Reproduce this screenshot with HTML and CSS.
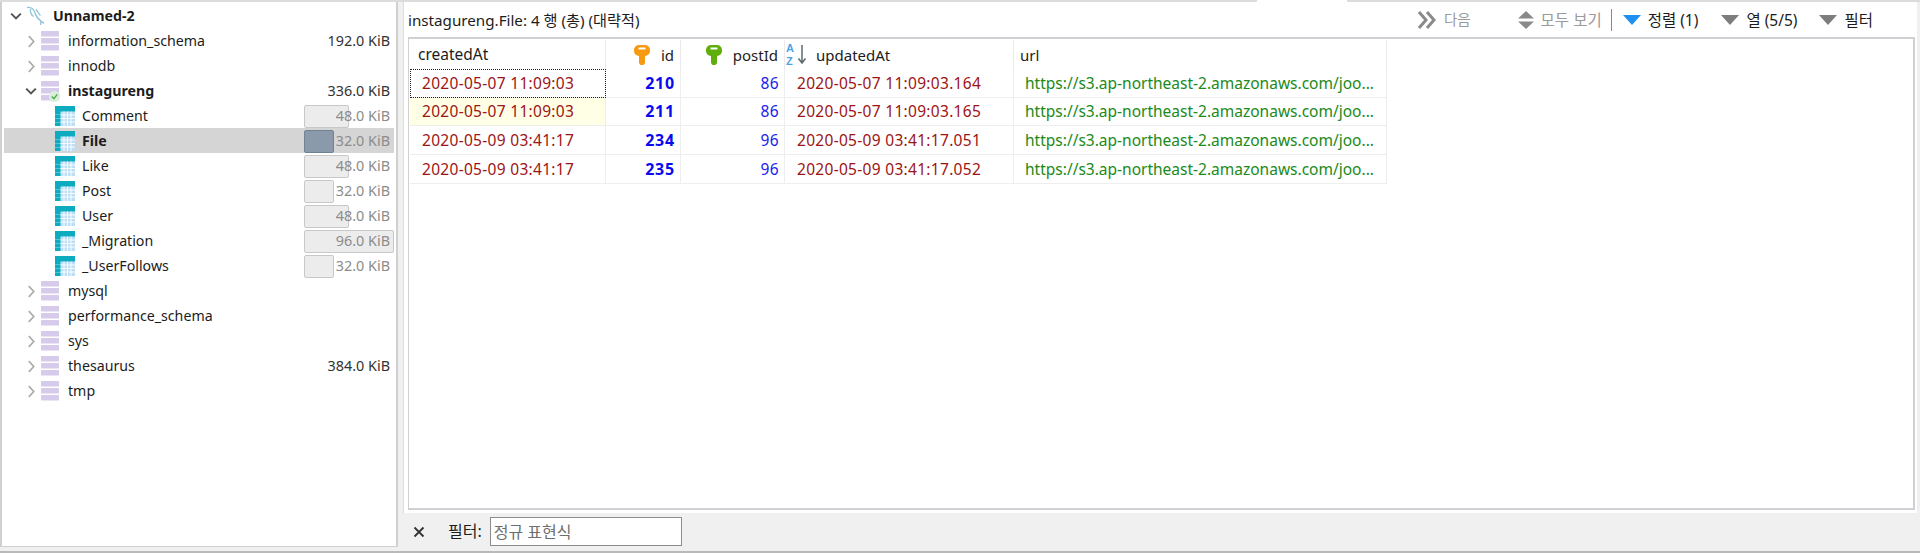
FILE: index.html
```html
<!DOCTYPE html>
<html lang="ko">
<head>
<meta charset="utf-8">
<title>instagureng.File</title>
<link rel="stylesheet" href="styles.css">
</head>
<body>
<svg class="defs" width="0" height="0">
  <defs>
    <symbol id="db" viewBox="0 0 18 20"><rect x="0" y="0" width="18" height="5.4" rx=".6" fill="#d6cbea"/><rect x="0" y="7" width="18" height="5.4" rx=".6" fill="#d6cbea"/><rect x="0" y="14" width="18" height="5.4" rx=".6" fill="#d6cbea"/></symbol>
    <symbol id="tbl" viewBox="0 0 20 20"><rect width="20" height="20" fill="#bcdff7"/><path d="M0 0H20V5.500H5.500V20H0Z" fill="#0cabc0"/><path d="M0 8.500H5.500M0 12.500H5.500M0 16.500H5.500" stroke="#fff" stroke-width=".6" opacity=".5"/><path d="M9 5.500V20M12.500 5.500V20M16 5.500V20M5.500 9H20M5.500 12.500H20M5.500 16H20" stroke="#fff" stroke-width=".9"/></symbol>
    <symbol id="ck" viewBox="0 0 10 10"><path d="M1 3l4 4 4-4" fill="none" stroke="#555" stroke-width="1.7"/></symbol>
    <symbol id="cr" viewBox="0 0 10 14"><path d="M2 1l5.500 6L2 13" fill="none" stroke="#aaa" stroke-width="1.8"/></symbol>
    <symbol id="key" viewBox="0 0 16 20"><path fill-rule="evenodd" d="M5 0H11A5 5 0 0 1 16 5V6A5 5 0 0 1 11 11V18L9.500 20H6.500L5 18V11A5 5 0 0 1 0 6V5A5 5 0 0 1 5 0ZM4.500 2.500V4.500H11.500V2.500Z"/></symbol>
    <symbol id="tri" viewBox="0 0 18 10"><path d="M0 0H18L9 10Z"/></symbol>
  </defs>
</svg>
<div class="topstrip"><span class="tab"></span></div>
<div class="main">
  <aside class="tree">
    <div class="row root"><svg class="chev-d"><use href="#ck"/></svg>
      <svg class="dolphin" viewBox="0 0 20 20"><path d="M1 1.500C6 1 8 3.500 9 7 10 10 12 13 15 15L18 17.500M15 15l-.5 4M4.500 3C4 6 5 8.500 7.500 10.500M10 3.500C12 6 13 8 14.500 9.500" fill="none" stroke="#8fc3d6" stroke-width="1.300"/></svg>
      <b class="name">Unnamed-2</b></div>
    <div class="row db"><svg class="chev-r"><use href="#cr"/></svg><svg class="dbi"><use href="#db"/></svg><span class="name">information_schema</span><span class="size">192.0 KiB</span></div>
    <div class="row db"><svg class="chev-r"><use href="#cr"/></svg><svg class="dbi"><use href="#db"/></svg><span class="name">innodb</span></div>
    <div class="row db"><svg class="chev-d wide"><use href="#ck"/></svg><span class="dbwrap"><svg class="dbi"><use href="#db"/></svg><svg class="okmark" viewBox="0 0 10 10"><circle cx="5" cy="5" r="5" fill="#d9efd9"/><path d="M2.500 5l2 2 3-4" fill="none" stroke="#4aa84a" stroke-width="1.200"/></svg></span><b class="name">instagureng</b><span class="size">336.0 KiB</span></div>
    <div class="row tb"><svg class="tbi"><use href="#tbl"/></svg><span class="name">Comment</span><span class="size faded"><i class="bar" style="width:45px"></i><em>48.0 KiB</em></span></div>
    <div class="row tb sel"><svg class="tbi"><use href="#tbl"/></svg><b class="name">File</b><span class="size faded"><i class="bar" style="width:30px"></i><em>32.0 KiB</em></span></div>
    <div class="row tb"><svg class="tbi"><use href="#tbl"/></svg><span class="name">Like</span><span class="size faded"><i class="bar" style="width:45px"></i><em>48.0 KiB</em></span></div>
    <div class="row tb"><svg class="tbi"><use href="#tbl"/></svg><span class="name">Post</span><span class="size faded"><i class="bar" style="width:30px"></i><em>32.0 KiB</em></span></div>
    <div class="row tb"><svg class="tbi"><use href="#tbl"/></svg><span class="name">User</span><span class="size faded"><i class="bar" style="width:45px"></i><em>48.0 KiB</em></span></div>
    <div class="row tb"><svg class="tbi"><use href="#tbl"/></svg><span class="name">_Migration</span><span class="size faded"><i class="bar" style="width:90px"></i><em>96.0 KiB</em></span></div>
    <div class="row tb"><svg class="tbi"><use href="#tbl"/></svg><span class="name">_UserFollows</span><span class="size faded"><i class="bar" style="width:30px"></i><em>32.0 KiB</em></span></div>
    <div class="row db"><svg class="chev-r"><use href="#cr"/></svg><svg class="dbi"><use href="#db"/></svg><span class="name">mysql</span></div>
    <div class="row db"><svg class="chev-r"><use href="#cr"/></svg><svg class="dbi"><use href="#db"/></svg><span class="name">performance_schema</span></div>
    <div class="row db"><svg class="chev-r"><use href="#cr"/></svg><svg class="dbi"><use href="#db"/></svg><span class="name">sys</span></div>
    <div class="row db"><svg class="chev-r"><use href="#cr"/></svg><svg class="dbi"><use href="#db"/></svg><span class="name">thesaurus</span><span class="size">384.0 KiB</span></div>
    <div class="row db"><svg class="chev-r"><use href="#cr"/></svg><svg class="dbi"><use href="#db"/></svg><span class="name">tmp</span></div>
  </aside>
  <section class="content">
    <div class="panel">
      <div class="toolbar">
        <span class="title">instagureng.File: 4 행 (총) (대략적)</span>
        <div class="actions">
          <span class="act dim w-next"><svg class="dbl" viewBox="0 0 20 20"><path d="M2 2l7 8-7 8M10 2l7 8-7 8" fill="none" stroke="#8a8a8a" stroke-width="3"/></svg>다음</span>
          <span class="act dim w-all"><svg class="updown" viewBox="0 0 16 20"><path d="M8 1l8 7.500H0Z" fill="#8a8a8a"/><path d="M0 11.500H16L8 19Z" fill="#8a8a8a"/></svg>모두 보기</span>
          <span class="sep"></span>
          <span class="act w-sort"><svg class="tri blue"><use href="#tri"/></svg>정렬 (1)</span>
          <span class="act w-col"><svg class="tri"><use href="#tri"/></svg>열 (5/5)</span>
          <span class="act w-flt"><svg class="tri"><use href="#tri"/></svg>필터</span>
        </div>
      </div>
      <div class="gridbox">
        <div class="grid">
          <div class="th c1"><span class="label">createdAt</span></div>
          <div class="th c2 end"><svg class="keyi orange"><use href="#key"/></svg><span class="label">id</span></div>
          <div class="th c3 end"><svg class="keyi green"><use href="#key"/></svg><span class="label">postId</span></div>
          <div class="th c4"><svg class="az" viewBox="0 -3 24 28"><text x="0" y="8" class="azt">A</text><text x="0" y="20.500" class="azt">Z</text><path d="M16 1V18M12.500 14.500L16 19l3.500-4.500" fill="none" stroke="#5c6b74" stroke-width="1.500"/></svg><span class="label">updatedAt</span></div>
          <div class="th c5"><span class="label">url</span></div>

          <div class="td date focus">2020-05-07 11:09:03</div><div class="td pk">210</div><div class="td num">86</div><div class="td date">2020-05-07 11:09:03.164</div><div class="td url">https://s3.ap-northeast-2.amazonaws.com/joo...</div>

          <div class="td date odd">2020-05-07 11:09:03</div><div class="td pk">211</div><div class="td num">86</div><div class="td date">2020-05-07 11:09:03.165</div><div class="td url">https://s3.ap-northeast-2.amazonaws.com/joo...</div>

          <div class="td date">2020-05-09 03:41:17</div><div class="td pk">234</div><div class="td num">96</div><div class="td date">2020-05-09 03:41:17.051</div><div class="td url">https://s3.ap-northeast-2.amazonaws.com/joo...</div>

          <div class="td date">2020-05-09 03:41:17</div><div class="td pk">235</div><div class="td num">96</div><div class="td date">2020-05-09 03:41:17.052</div><div class="td url">https://s3.ap-northeast-2.amazonaws.com/joo...</div>
        </div>
      </div>
    </div>
    <div class="filterbar">
      <svg class="close" viewBox="0 0 12 12"><path d="M1.500 1.500l9 9M10.500 1.500l-9 9" stroke="#333" stroke-width="1.800"/></svg>
      <span class="flabel">필터:</span>
      <input class="finput" type="text" placeholder="정규 표현식">
    </div>
  </section>
</div>
<div class="bottomstrip"></div>
</body>
</html>
```
FILE: styles.css
```css
* { box-sizing: border-box; }
html, body { margin: 0; padding: 0; }
body {
  width: 1920px;
  height: 553px;
  overflow: hidden;
  background: #f0f0f0;
  color: #1c1c1c;
  font: 14px/1.2 "Noto Sans", "Noto Sans CJK KR", sans-serif;
  display: flex;
  flex-direction: column;
}
.defs { position: absolute; }
.topstrip { height: 2px; background: #dcdcdc; padding-left: 1257px; flex: none; }
.tab { display: block; width: 90px; height: 2px; background: #fff; }
.main { flex: 1; display: flex; min-height: 0; }
.bottomstrip { height: 2px; flex: none; background: #b9b9b9; }

.tree {
  width: 398px;
  margin-bottom: 4px;
  padding: 1px 2px 0 2px;
  background: #fff;
  border: 2px solid #d0d0d0;
  border-width: 0 2px 1px 2px;
  flex: none;
  font-size: 14.2px;
}
.row { height: 25px; display: flex; align-items: center; white-space: nowrap; padding-top: 1px; }
.row.root { padding-left: 6px; padding-top: 0; }
.row.db { padding-left: 21px; }
.row.tb { padding-left: 51px; }
.row.sel { background: #d5d5d5; }
.chev-d { width: 12px; height: 12px; margin-right: 4px; flex: none; }
.chev-r { width: 9px; height: 13px; margin-left: 2px; margin-right: 5px; flex: none; }
.dolphin { width: 20px; height: 20px; margin-right: 7px; flex: none; }
.dbi { width: 18px; height: 20px; display: block; flex: none; }
.row.db .name { margin-left: 9px; }
.dbwrap { position: relative; display: block; width: 18px; height: 20px; flex: none; }
.okmark { position: absolute; right: -1px; bottom: -1px; width: 11px; height: 11px; }
.tbi { width: 20px; height: 20px; flex: none; margin-right: 7px; }
b.name { font-weight: 700; }
.size { margin-left: auto; width: 90px; padding-right: 4px; text-align: right; position: relative; color: #333; font-size: 14.4px; }
.size.faded { color: #8c8c8c; }
.size em { font-style: normal; position: relative; }
.bar {
  position: absolute;
  left: 0;
  top: -2px;
  height: 23px;
  background: #ececec;
  border: 1px solid #c8c8c8;
  border-radius: 2px;
}
.sel .bar { background: #8b9aaa; border-color: #6f8296; }

.content { flex: 1; display: flex; flex-direction: column; padding: 0 3px 0 5px; min-width: 0; }
.panel {
  height: 511px;
  flex: none;
  background: #fff;
  border-left: 1px solid #dcdcdc;
  padding: 0 0 3px 4px;
  display: flex;
  flex-direction: column;
}
.toolbar { height: 35px; display: flex; align-items: center; flex: none; padding-top: 1px; }
.title { font-size: 15.2px; }
.actions { margin-left: auto; display: flex; align-items: center; }
.act { display: flex; align-items: center; font-size: 15.5px; }
.act.dim { color: #9a9a9a; }
.act.w-next { font-size: 14.5px; }
.dbl { width: 20px; height: 20px; margin-right: 7px; }
.updown { width: 16px; height: 20px; margin-right: 7px; }
.tri { width: 18px; height: 10px; margin-right: 7px; fill: #7d7d7d; }
.tri.blue { fill: #1e90f0; }
.sep { width: 1px; height: 22px; background: #8a8a8a; margin: 0 11px 0 9px; }
.w-next { margin-right: 47px; }
.w-sort { margin-right: 23px; }
.w-col { margin-right: 22px; }
.w-flt { margin-right: 44px; }

.gridbox {
  flex: 1;
  min-height: 0;
  border: 2px solid #cfcfd4;
  border-width: 2px 2px 2px 1px;
  background: #fff;
  margin-right: 2px;
  padding: 1px 0 0 1px;
}
.grid {
  display: grid;
  grid-template-columns: 196px 75px 104px 229px 373px;
  grid-template-rows: 29px repeat(4, 28.7px);
  width: 977px;
  font-size: 15px;
}
.th {
  display: flex;
  align-items: center;
  padding: 0 4px 0 8px;
  border-right: 1px solid #eaeaea;
  white-space: nowrap;
}
.th.end { justify-content: flex-end; padding-right: 6px; }
.th.c1 .label { font-size: 15.5px; }
.th.c5 { padding-left: 6px; }
.label { display: block; }
.keyi { width: 16px; height: 20px; margin-right: 11px; flex: none; }
.orange { fill: #f79a12; }
.green { fill: #5fae0a; }
.az { width: 24px; height: 28px; margin-left: -7px; margin-right: 6px; flex: none; }
.azt { font: 700 11px "Liberation Sans", sans-serif; fill: #4aa3e8; }
.td {
  display: flex;
  align-items: center;
  padding: 0 5px;
  border-right: 1px solid #eee;
  border-bottom: 1px solid #eee;
  white-space: nowrap;
  overflow: hidden;
}
.date { color: #9c1414; padding-left: 12px; font-size: 15.5px; letter-spacing: .3px; }
.pk { color: #0a0af0; font-weight: 700; justify-content: flex-end; font-size: 16px; letter-spacing: .8px; padding-top: 1px; }
.num { color: #2020f0; justify-content: flex-end; font-size: 15.5px; letter-spacing: .4px; }
.url { color: #1a8a1a; padding-left: 11px; font-size: 15.5px; }
.odd { background: #ffffe6; }
.focus { outline: 1px dotted #222; outline-offset: -1px; }

.filterbar { flex: 1; display: flex; align-items: center; padding: 4px 0 5px 10px; font-size: 16px; }
.close { width: 12px; height: 12px; margin-right: 23px; flex: none; }
.flabel { margin-right: 8px; }
.finput {
  width: 192px;
  height: 29px;
  border: 1px solid #8c8c8c;
  background: #fff;
  padding: 0 3px;
  font: 16px "Noto Sans", "Noto Sans CJK KR", sans-serif;
}
.finput::placeholder { color: #6e6e6e; opacity: 1; }
```
